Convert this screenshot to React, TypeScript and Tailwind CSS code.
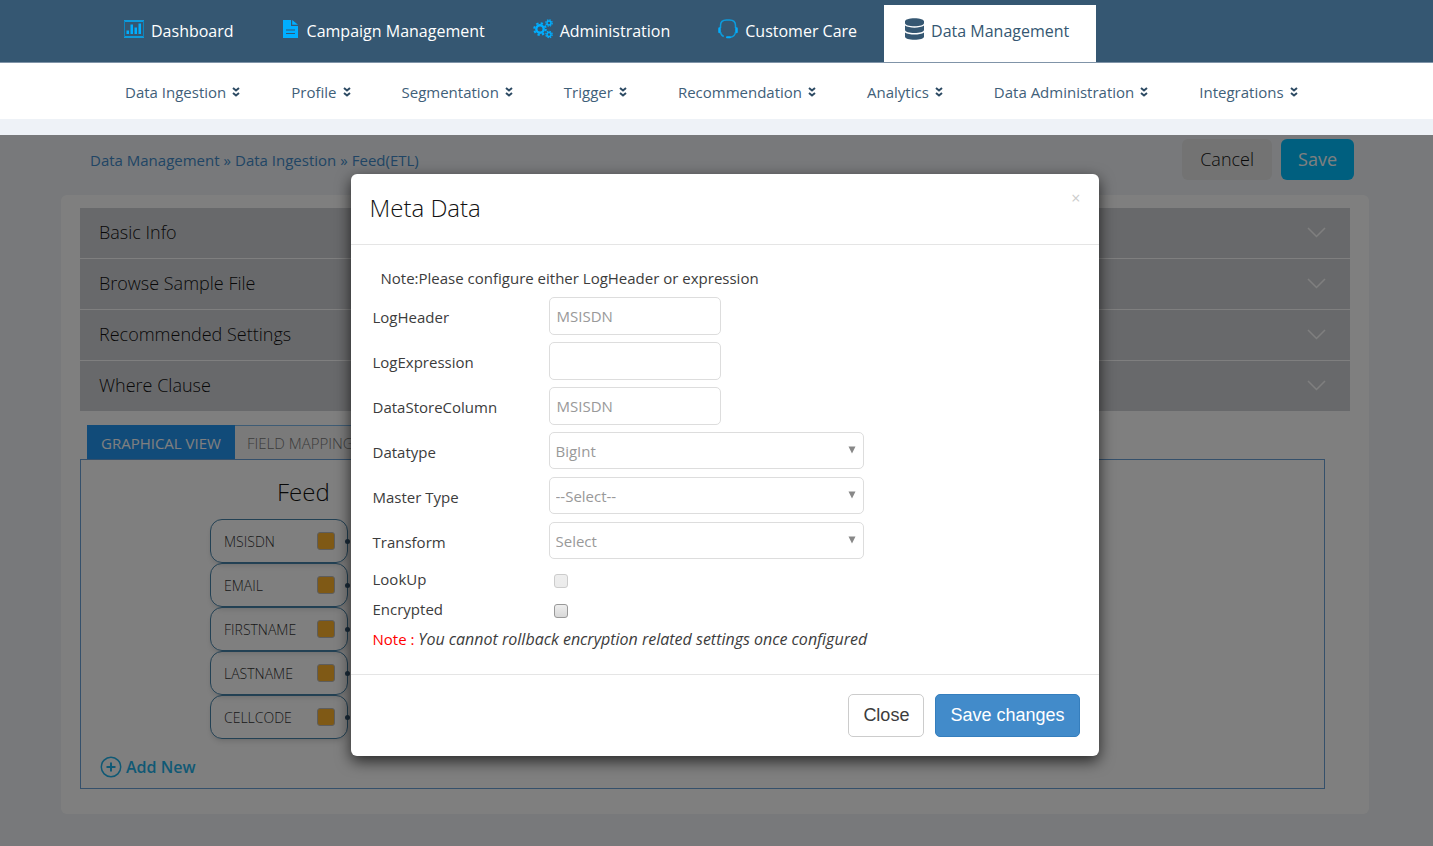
import React from 'react';
import clsx from 'clsx';
import { FaDatabase } from 'react-icons/fa';

const ChartIcon = () => (
  <svg width="20" height="18" viewBox="0 0 20 18" fill="#00aeff">
    <path d="M0 1h20M0 17h20" stroke="#0c9bdc" strokeWidth="2" />
    <path d="M.5 1v16M19.500 1v16" stroke="#0c86c0" />
    <rect x="2.5" y="10.5" width="2.5" height="3.5" />
    <rect x="6.5" y="4.5" width="2.5" height="9.5" />
    <rect x="10.5" y="7.5" width="2.5" height="6.5" />
    <rect x="14.5" y="3.5" width="2.5" height="10.5" />
  </svg>
);

const FileIcon = () => (
  <svg width="18" height="18" viewBox="0 0 18 18" fill="#00aeff">
    <path d="M1 0h8v6h7v12H1z" />
    <path d="M10.200 0v4.800H16z" />
    <path d="M4 10h9M4 13.500h9" stroke="#355772" strokeWidth="1.200" />
  </svg>
);

const GearsIcon = () => (
  <svg width="20" height="20" viewBox="0 0 20 20" fill="none" stroke="#00aeff">
    <circle cx="7" cy="10" r="3.700" strokeWidth="2.400" />
    <circle cx="7" cy="10" r="5.800" strokeWidth="2" strokeDasharray="2.300 2.255" />
    <circle cx="16" cy="4" r="2" strokeWidth="1.400" />
    <circle cx="16" cy="4" r="3.200" strokeWidth="1.200" strokeDasharray="1.500 1.013" />
    <circle cx="16" cy="15.500" r="2" strokeWidth="1.400" />
    <circle cx="16" cy="15.500" r="3.200" strokeWidth="1.200" strokeDasharray="1.500 1.013" />
  </svg>
);

const HeadsetIcon = () => (
  <svg width="20" height="20" viewBox="0 0 20 20" fill="none" stroke="#0c9bdc" strokeWidth="1.500">
    <path d="M2.500 9V6.500C2.500 3 5 1 8.500 1h3c3.500 0 6 2 6 5.500V9" />
    <path d="M1.500 9.500v3.500M18.500 9.500v3.500" stroke="#00aeff" strokeWidth="2.500" strokeLinecap="round" />
    <path d="M2.500 13c.2 2.300 1.200 3.800 3.300 4.500" />
    <path d="M17.500 13c-.2 2.300-1.500 4.500-5 5.300" />
    <path d="M9 18.300h3" stroke="#00aeff" strokeWidth="2" strokeLinecap="round" />
  </svg>
);

const DoubleChevron = () => (
  <svg width="8" height="10" viewBox="0 0 8 10" fill="none" stroke="#2c4a63" strokeWidth="2">
    <path d="M1 1l3 2.500L7 1M1 6l3 2.500L7 6" />
  </svg>
);

const PlusCircle = () => (
  <svg width="22" height="22" viewBox="0 0 22 22" fill="none" stroke="#1fb2ea" strokeWidth="1.500">
    <circle cx="11" cy="11" r="9.700" />
    <path d="M11 6.500v9M6.500 11h9" strokeWidth="2" />
  </svg>
);

const mainNav = [
  { label: 'Dashboard', icon: <ChartIcon /> },
  { label: 'Campaign Management', icon: <FileIcon /> },
  { label: 'Administration', icon: <GearsIcon /> },
  { label: 'Customer Care', icon: <HeadsetIcon /> },
  { label: 'Data Management', icon: <FaDatabase className="h-[22px] w-[19px]" />, active: true },
];

const subNav = [
  'Data Ingestion',
  'Profile',
  'Segmentation',
  'Trigger',
  'Recommendation',
  'Analytics',
  'Data Administration',
  'Integrations',
];

const sections = ['Basic Info', 'Browse Sample File', 'Recommended Settings', 'Where Clause'];
const feedFields = ['MSISDN', 'EMAIL', 'FIRSTNAME', 'LASTNAME', 'CELLCODE'];

const Header = () => (
  <header>
    <nav className="flex h-[63px] items-end border-b border-[#8094a8] bg-[#355772] pl-[103px] text-base">
      {mainNav.map((item) => (
        <a
          key={item.label}
          href="#"
          className={clsx(
            'flex h-[57px] items-center gap-[7px] pr-[27px] pl-[21px] pb-1.5 whitespace-nowrap',
            item.active ? 'bg-white text-[#355772]' : 'font-medium text-white'
          )}
        >
          <span className="pb-1">{item.icon}</span>
          {item.label}
        </a>
      ))}
    </nav>
    <nav className="flex h-14 items-center gap-[51px] bg-white pt-0.5 pl-[125px] text-[15px] text-[#3f6079]">
      {subNav.map((label) => (
        <a key={label} href="#" className="flex items-center gap-1.5 whitespace-nowrap">
          {label}
          <DoubleChevron />
        </a>
      ))}
    </nav>
    <div className="h-4 bg-[#eef2f7]" />
  </header>
);

const FeedPage = () => (
  <div className="pt-1 pb-8">
    <div className="mr-[79px] ml-[90px] flex items-center justify-between">
      <div className="flex gap-1 pt-0.5 text-[15px] text-[#428bca]">
        <a href="#">Data Management</a>»<a href="#">Data Ingestion</a>»<a href="#">Feed(ETL)</a>
      </div>
      <div className="flex gap-[9px] text-lg">
        <button className="h-[41px] rounded-md bg-[#e6e6e6] px-[18px] pb-0.5 font-light text-[#111]">Cancel</button>
        <button className="h-[41px] rounded-md bg-[#00bfff] px-[17px] pb-0.5 text-white">Save</button>
      </div>
    </div>

    <div className="mt-[15px] mr-16 ml-[61px] rounded-md bg-white px-[19px] pt-[13px] pb-[25px]">
      <div className="grid gap-px">
        {sections.map((title) => (
          <button
            key={title}
            className="flex h-[50px] items-center justify-between bg-[#d0d3d7] pr-6 pb-0.5 pl-[19px] text-lg font-light text-[#111]"
          >
            {title}
            <svg width="19" height="11" viewBox="0 0 19 11" fill="none" stroke="#fff" strokeWidth="1.500">
              <path d="M1 1l8.500 8.500L18 1" />
            </svg>
          </button>
        ))}
      </div>

      <div className="mt-3.5 mr-[25px]">
        <div className="flex pl-[7px] text-[15px]">
          <button className="h-[34px] bg-[#2397f3] px-3.5 pt-0.5 font-medium text-white">GRAPHICAL VIEW</button>
          <button className="h-[34px] border-t border-r border-[#7db9ea] bg-[#f4f4f4] px-3 pt-0.5 font-light text-[#777]">
            FIELD MAPPING
          </button>
        </div>
        <div className="border border-[#6ba1d6] pb-[9px]">
          <div className="ml-[129px] w-[138px]">
            <h3 className="pt-4 pb-[11px] pl-[67px] text-2xl font-light text-[#111]">Feed</h3>
            {feedFields.map((name) => (
              <div
                key={name}
                className="relative flex h-11 items-center justify-between rounded-xl border border-[#4682a8] pr-3 pl-[13px] text-sm font-light text-[#333] shadow-md"
              >
                <span className="pt-0.5">{name}</span>
                <span className="size-[18px] rounded-[3px] border border-[#bbb] bg-[#ffb32b]" />
                <span className="absolute top-[19px] -right-[3px] size-[5px] rounded-full bg-[#355772]" />
              </div>
            ))}
          </div>
          <button className="mt-4 ml-[19px] flex items-center gap-1 text-base font-semibold text-[#1fb2ea]">
            <PlusCircle />
            Add New
          </button>
        </div>
      </div>
    </div>
  </div>
);

interface FieldProps {
  id: string;
  label: string;
  value: string;
}

const TextField = ({ id, label, value }: FieldProps) => (
  <div className="flex h-[38px] items-center">
    <label htmlFor={id} className="w-44 pt-0.5">
      {label}
    </label>
    <input
      id={id}
      defaultValue={value}
      className="h-[38px] w-[172px] rounded-[5px] border border-[#ddd] px-[7px] text-[#999]"
    />
  </div>
);

const SelectField = ({ id, label, value }: FieldProps) => (
  <div className="flex h-[38px] items-center">
    <label htmlFor={id} className="w-44 pt-0.5">
      {label}
    </label>
    <div className="relative self-start">
      <select
        id={id}
        className="h-[37px] w-[315px] appearance-none rounded-[5px] border border-[#ddd] bg-white px-1.5 pt-0.5 text-[#999]"
      >
        <option>{value}</option>
      </select>
      <svg width="8" height="8" viewBox="0 0 8 8" fill="#888" className="pointer-events-none absolute top-3.5 right-2">
        <path d="M.5.500h7L4 7.500z" />
      </svg>
    </div>
  </div>
);

const CheckField = ({ id, label, disabled }: { id: string; label: string; disabled?: boolean }) => (
  <div className="flex h-[30px] items-center">
    <label htmlFor={id} className="w-[181px] pb-0.5">
      {label}
    </label>
    <input
      id={id}
      type="checkbox"
      disabled={disabled}
      className="mt-0.5 size-3.5 appearance-none rounded-[3px] border border-[#999] bg-gradient-to-b from-[#eee] to-[#d8d8d8] disabled:border-[#ccc] disabled:to-[#ebebeb]"
    />
  </div>
);

const MetaDataDialog = () => (
  <div
    role="dialog"
    aria-labelledby="meta-title"
    className="w-[748px] rounded-md bg-white text-[15px] text-[#3c3c3c] shadow-[0_5px_15px_rgba(0,0,0,0.7)]"
  >
    <div className="flex h-[71px] items-start justify-between border-b border-[#e5e5e5] pr-[18px] pl-[19px]">
      <h2 id="meta-title" className="pt-[18px] text-2xl font-light text-[#111]">
        Meta Data
      </h2>
      <button aria-label="Close dialog" className="pt-3 text-base text-[#ccc]">
        ×
      </button>
    </div>
    <form className="px-[22px] pt-[19px] pb-[21px]">
      <p className="mb-[5px] pl-2 leading-7">Note:Please configure either LogHeader or expression</p>
      <div className="mb-[5px] grid gap-[7px]">
        <TextField id="log-header" label="LogHeader" value="MSISDN" />
        <TextField id="log-expression" label="LogExpression" value="" />
        <TextField id="column" label="DataStoreColumn" value="MSISDN" />
        <SelectField id="datatype" label="Datatype" value="BigInt" />
        <SelectField id="master-type" label="Master Type" value="--Select--" />
        <SelectField id="transform" label="Transform" value="Select" />
      </div>
      <CheckField id="lookup" label="LookUp" disabled />
      <CheckField id="encrypted" label="Encrypted" />
      <p className="leading-7">
        <span className="text-[#f00]">Note : </span>
        <em className="text-base leading-7">You cannot rollback encryption related settings once configured</em>
      </p>
    </form>
    <div className="flex justify-end gap-[11px] border-t border-[#e5e5e5] py-[19px] pr-[19px] font-['Liberation_Sans',Arial,sans-serif] text-lg">
      <button className="h-[43px] rounded-[5px] border border-[#ccc] px-3.5 pb-0.5">Close</button>
      <button className="h-[43px] rounded-[5px] border border-[#357ebd] bg-[#428bca] px-3.5 pb-0.5 text-white">
        Save changes
      </button>
    </div>
  </div>
);

const App = () => {
  return (
    <div className="flex min-h-screen flex-col bg-[#f0f3f6] font-['Open_Sans',sans-serif]">
      <Header />
      <main className="relative flex-1">
        <FeedPage />
        <div className="absolute inset-0 flex items-start justify-center bg-black/50 pt-[39px] pl-4">
          <MetaDataDialog />
        </div>
      </main>
    </div>
  );
};

export default App;
